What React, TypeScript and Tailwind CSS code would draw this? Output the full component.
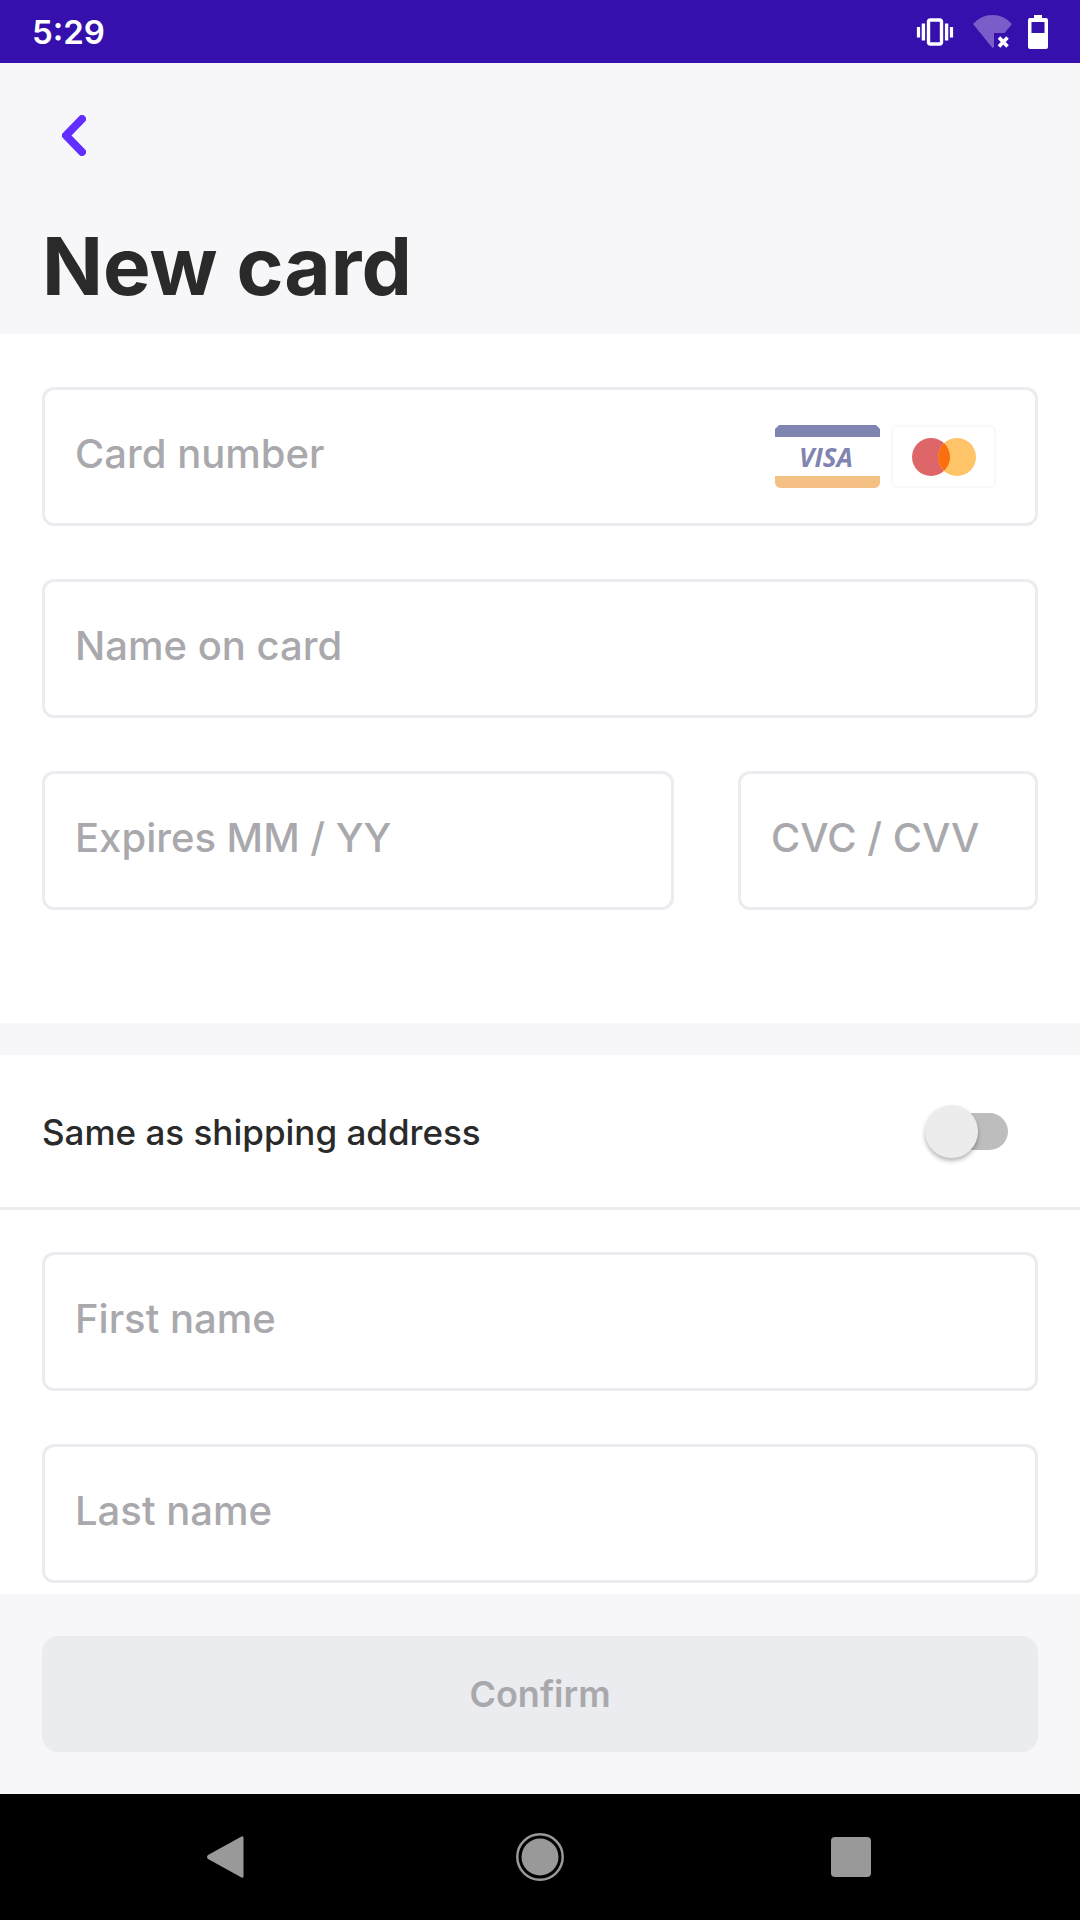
import React, { useState } from "react";

type FieldProps = {
  id: string;
  label: string;
  className?: string;
  children?: React.ReactNode;
};

function Field({ id, label, className = "", children }: FieldProps) {
  return (
    <div
      className={`flex h-[139px] min-w-0 items-center rounded-xl border-[3px] border-[#ebebf0] bg-white pl-[30px] pr-[39px] ${className}`}
    >
      <input
        id={id}
        name={id}
        type="text"
        aria-label={label}
        placeholder={label}
        className="h-full w-full min-w-0 flex-1 bg-transparent pb-[7px] text-[40px] font-medium text-[#2a2a2b] outline-none placeholder:text-[#a9a9ad] placeholder:opacity-100"
      />
      {children}
    </div>
  );
}

function VisaLogo() {
  return (
    <svg width="105" height="63" viewBox="0 0 105 63" role="img" aria-label="Visa">
      <path d="M0 12V4L4 0H101L105 4V12Z" fill="#7f85b0" />
      <path d="M0 51V58Q1 63 6 63H99Q104 63 105 58V51Z" fill="#f5c083" />
      <text
        x="51"
        y="42"
        textAnchor="middle"
        fill="#7f85b0"
        className="font-['Open_Sans',sans-serif] text-[26px] font-bold italic"
      >
        VISA
      </text>
    </svg>
  );
}

function MastercardLogo() {
  return (
    <svg width="105" height="63" viewBox="0 0 105 63" role="img" aria-label="Mastercard">
      <rect x="1" y="1" width="103" height="61" rx="5" fill="#fff" stroke="#f8f8f9" strokeWidth="2" />
      <circle cx="40" cy="32" r="19" fill="#df6668" />
      <circle cx="66" cy="32" r="19" fill="#ffc368" />
      <path d="M53 18.1A19 19 0 0 1 53 45.9A19 19 0 0 1 53 18.1Z" fill="#fa7010" />
    </svg>
  );
}

function StatusBar() {
  return (
    <div className="flex h-[63px] items-center justify-between bg-[#3510ac] px-8 text-white">
      <span className="pt-[2px] text-[33px] font-semibold leading-none">5:29</span>
      <div className="flex items-center">
        <svg width="38" height="34" viewBox="916 14 38 34" aria-hidden="true">
          <rect x="928.5" y="19" width="13" height="24" rx="2" fill="none" stroke="#fff" strokeWidth="3.4" />
          <path d="M923.4 22.5V39.5M946.6 22.5V39.5" stroke="#fff" strokeWidth="3.4" />
          <path d="M918.5 26V36.5M951.5 26V36.5" stroke="#fff" strokeWidth="3.2" />
        </svg>
        <svg width="42" height="34" viewBox="972 14 42 34" className="ml-[18px]" aria-hidden="true">
          <path d="M973 23Q981 14 992.5 14Q1004 14 1012 23L1004.5 32H994V46L992.5 47Z" fill="#7b5dca" />
          <path d="M999 36.5L1007.500 45.500M1007.500 36.500L999 45.500" stroke="#fff" strokeWidth="3.6" />
        </svg>
        <svg width="20" height="34" viewBox="1028 14 20 34" className="ml-[14px]" aria-hidden="true">
          <path
            fillRule="evenodd"
            d="M1034 14H1042V17H1046Q1048 17 1048 19V46Q1048 48 1046 48H1030Q1028 48 1028 46V19Q1028 17 1030 17H1034ZM1031.500 21V32H1044.500V21Z"
            fill="#fff"
          />
        </svg>
      </div>
    </div>
  );
}

function NavBar() {
  return (
    <nav aria-label="System" className="grid h-[126px] grid-cols-3 bg-black px-[74px]">
      <button type="button" aria-label="Back" className="flex items-center justify-center">
        <svg width="48" height="48" viewBox="0 0 48 48" fill="#999">
          <path d="M36.500 3.500Q38.500 2.500 38.500 5V43Q38.500 45.500 36.500 44.500L3 26Q1 24 3 22Z" />
        </svg>
      </button>
      <button type="button" aria-label="Home" className="flex items-center justify-center">
        <svg width="50" height="50" viewBox="0 0 50 50">
          <circle cx="25" cy="25" r="22.700" fill="none" stroke="#999" strokeWidth="2.500" />
          <circle cx="25" cy="25" r="18.500" fill="#999" />
        </svg>
      </button>
      <button type="button" aria-label="Recent apps" className="flex items-center justify-center">
        <svg width="40" height="40" viewBox="0 0 40 40">
          <rect width="40" height="40" rx="4" fill="#999" />
        </svg>
      </button>
    </nav>
  );
}

export default function App() {
  const [same, setSame] = useState(false);
  return (
    <div className="flex min-h-screen flex-col bg-white font-['Inter',sans-serif] text-[#2a2a2b]">
      <StatusBar />
      <header className="bg-[#f7f7f9] px-[42px] pb-[18px] pt-9">
        <button type="button" aria-label="Go back" className="flex h-[72px] w-16 items-center pl-5">
          <svg width="24" height="41" viewBox="0 0 24 41" fill="none">
            <path
              d="M20 4L4 20.500L20 37"
              stroke="#612eff"
              strokeWidth="8"
              strokeLinecap="round"
              strokeLinejoin="round"
            />
          </svg>
        </button>
        <h1 className="mt-[45px] text-[80px] font-bold leading-[100px]">New card</h1>
      </header>
      <form className="flex flex-1 flex-col" onSubmit={(e) => e.preventDefault()}>
        <section className="flex flex-col gap-[53px] px-[42px] pb-[113px] pt-[53px]">
          <Field id="number" label="Card number">
            <div className="flex shrink-0 gap-[11px]">
              <VisaLogo />
              <MastercardLogo />
            </div>
          </Field>
          <Field id="holder" label="Name on card" />
          <div className="flex gap-16">
            <Field id="expires" label="Expires MM / YY" className="flex-1" />
            <Field id="cvc" label="CVC / CVV" className="w-[300px]" />
          </div>
        </section>
        <div className="h-8 bg-[#f7f7f9]" />
        <div className="flex h-[155px] items-center justify-between border-b-[3px] border-[#ebebf0] pl-[42px] pr-[72px]">
          <label htmlFor="same" className="pt-[2px] text-[35px] font-medium leading-[48px]">
            Same as shipping address
          </label>
          <input
            id="same"
            type="checkbox"
            role="switch"
            checked={same}
            onChange={(e) => setSame(e.target.checked)}
            className="relative h-[37px] w-[78px] shrink-0 appearance-none rounded-full bg-[#bdbdbd] before:absolute before:-left-[5px] before:-top-2 before:size-[53px] before:rounded-full before:bg-[#ececec] before:shadow-[0_3px_4px_rgba(0,0,0,0.28)] before:content-[''] checked:bg-[#b097ff] checked:before:left-[30px] checked:before:bg-[#612eff]"
          />
        </div>
        <section className="flex flex-1 flex-col gap-[53px] px-[42px] pb-[11px] pt-[42px]">
          <Field id="first" label="First name" />
          <Field id="last" label="Last name" />
        </section>
        <div className="bg-[#f7f7f9] px-[42px] py-[42px]">
          <button
            type="submit"
            className="flex h-[116px] w-full items-center justify-center rounded-2xl bg-[#ebecf0] text-[36px] font-semibold text-[#a9a9ad]"
          >
            Confirm
          </button>
        </div>
      </form>
      <NavBar />
    </div>
  );
}
